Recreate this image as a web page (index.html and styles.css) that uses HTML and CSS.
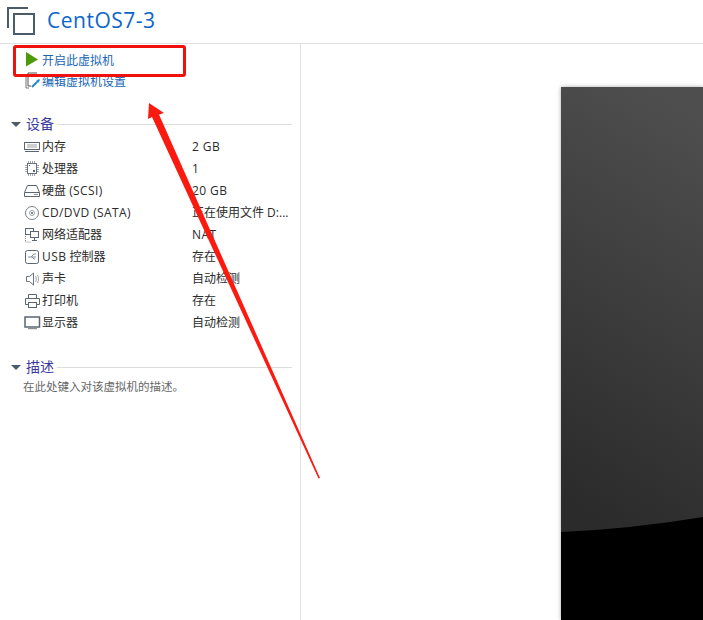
FILE: index.html
```html
<!doctype html>
<html>

<head>
    <title>CentOS7-3</title>
    <link rel="stylesheet" href="styles.css">
</head>

<body>
    <header class="vm-header">
        <svg class="vm-icon" width="36" height="36" viewBox="0 0 36 36">
            <path d="M28 8H8v20" fill="none" stroke="#4c5b68" stroke-width="2"/>
            <rect x="14" y="14" width="20" height="20" fill="none" stroke="#4c5b68" stroke-width="2"/>
        </svg>
        <h1 class="vm-title">CentOS7-3</h1>
    </header>

    <div class="content">
        <aside class="sidebar">
            <div class="actions">
                <a class="action">
                    <svg class="action-icon" width="17" height="21" viewBox="0 0 17 21">
                        <path d="M1 3l12 7.500-12 7z" fill="#4d9a08"/>
                    </svg>
                    <span class="action-text">开启此虚拟机</span>
                </a>
                <a class="action">
                    <svg class="action-icon" width="17" height="21" viewBox="0 0 17 21">
                        <path d="M3 3h9M3 3v13h3" fill="none" stroke="#555" stroke-width="1"/>
                        <path d="M1 6v12h3" fill="none" stroke="#777" stroke-width="1"/>
                        <path d="M7 17l5-5" stroke="#1e88d0" stroke-width="2"/>
                        <path d="M11 11l3-2 1 1-2 3z" fill="#1e88d0"/>
                    </svg>
                    <span class="action-text">编辑虚拟机设置</span>
                </a>
            </div>

            <section class="panel panel-devices">
                <div class="panel-head">
                    <span class="caret"></span>
                    <span class="panel-title">设备</span>
                    <span class="panel-line"></span>
                </div>
                <div class="device">
                    <svg class="device-icon" width="17" height="14" viewBox="0 0 17 14">
                        <rect x="0.500" y="2.500" width="15" height="7" fill="none" stroke="#5a6670"/>
                        <path d="M3 5h10M3 7h10" stroke="#9aa0a5"/>
                        <path d="M1 11.500h14" stroke="#5a6670"/>
                    </svg>
                    <span class="device-name">内存</span>
                    <span class="device-value latin">2 GB</span>
                </div>
                <div class="device">
                    <svg class="device-icon" width="17" height="16" viewBox="0 0 17 16">
                        <rect x="3.500" y="2.500" width="9" height="10" fill="#fff" stroke="#6a747c"/>
                        <path d="M4.500 0v2M6.500 0v2M8.500 0v2M10.500 0v2M4.500 13v2M6.500 13v2M8.500 13v2M10.500 13v2M1 4.500h2M1 6.500h2M1 8.500h2M1 10.500h2M13 4.500h2M13 6.500h2M13 8.500h2M13 10.500h2" stroke="#a0a5aa"/>
                        <rect x="9" y="9" width="2" height="2" fill="#5a6670"/>
                        <rect x="5" y="4" width="1" height="1" fill="#5a6670"/>
                    </svg>
                    <span class="device-name">处理器</span>
                    <span class="device-value">1</span>
                </div>
                <div class="device">
                    <svg class="device-icon" width="17" height="14" viewBox="0 0 17 14">
                        <path d="M0.500 8.500l3-7h9l3 7v4h-15zM0.500 8.500h15" fill="none" stroke="#5a6670"/>
                        <path d="M10 10.500h4" stroke="#8a9096"/>
                    </svg>
                    <span class="device-name">硬盘 <span class="latin">(SCSI)</span></span>
                    <span class="device-value latin">20 GB</span>
                </div>
                <div class="device">
                    <svg class="device-icon" width="17" height="16" viewBox="0 0 17 16">
                        <circle cx="8" cy="8" r="6.500" fill="none" stroke="#7a8288"/>
                        <circle cx="8" cy="8" r="2.500" fill="none" stroke="#9aa0a5"/>
                        <circle cx="8" cy="8" r="1" fill="#5a6670"/>
                    </svg>
                    <span class="device-name latin">CD/DVD (SATA)</span>
                    <span class="device-value">正在使用文件 D:...</span>
                </div>
                <div class="device">
                    <svg class="device-icon" width="17" height="16" viewBox="0 0 17 16">
                        <rect x="1.500" y="1.500" width="8" height="6" fill="#fff" stroke="#5a6670"/>
                        <rect x="6.500" y="4.500" width="8" height="6" fill="#fff" stroke="#5a6670"/>
                        <path d="M10.500 11v2M8 13.500h5" stroke="#5a6670"/>
                        <path d="M1.500 9v6h5" fill="none" stroke="#888" stroke-dasharray="1 1"/>
                    </svg>
                    <span class="device-name">网络适配器</span>
                    <span class="device-value latin">NAT</span>
                </div>
                <div class="device">
                    <svg class="device-icon" width="17" height="16" viewBox="0 0 17 16">
                        <rect x="1.500" y="1.500" width="13" height="13" rx="2" fill="none" stroke="#5a6670"/>
                        <path d="M4 8h8M7 8l3-3h2M8 8l2 2h1" fill="none" stroke="#8a9096"/>
                    </svg>
                    <span class="device-name"><span class="latin">USB</span> 控制器</span>
                    <span class="device-value">存在</span>
                </div>
                <div class="device">
                    <svg class="device-icon" width="17" height="16" viewBox="0 0 17 16">
                        <path d="M2.500 5.500h3l4-3.500v12l-4-3.500h-3z" fill="none" stroke="#6a747c"/>
                        <path d="M11.500 5c1 2 1 4 0 6M13.500 4c1.300 2.500 1.300 5.500 0 8" fill="none" stroke="#a0a5aa"/>
                    </svg>
                    <span class="device-name">声卡</span>
                    <span class="device-value">自动检测</span>
                </div>
                <div class="device">
                    <svg class="device-icon" width="17" height="16" viewBox="0 0 17 16">
                        <path d="M4.500 5.500v-4h8v4M4.500 11.500h-3v-6h14v6h-3" fill="none" stroke="#5a6670"/>
                        <rect x="4.500" y="9.500" width="8" height="5" fill="none" stroke="#5a6670"/>
                    </svg>
                    <span class="device-name">打印机</span>
                    <span class="device-value">存在</span>
                </div>
                <div class="device">
                    <svg class="device-icon" width="17" height="16" viewBox="0 0 17 16">
                        <rect x="1" y="2" width="14.500" height="10" fill="none" stroke="#5a6670" stroke-width="1.500"/>
                        <path d="M4 13.500h9" stroke="#8a9096" stroke-width="1.500"/>
                    </svg>
                    <span class="device-name">显示器</span>
                    <span class="device-value">自动检测</span>
                </div>
            </section>

            <section class="panel panel-desc">
                <div class="panel-head">
                    <span class="caret"></span>
                    <span class="panel-title">描述</span>
                    <span class="panel-line"></span>
                </div>
                <p class="desc-text">在此处键入对该虚拟机的描述。</p>
            </section>
        </aside>

        <main class="preview">
            <svg class="thumb" width="142" height="533" viewBox="0 0 142 533">
                <defs>
                    <linearGradient id="glass" x1="0.600" y1="0" x2="0.400" y2="1">
                        <stop offset="0" stop-color="#4e4e4e"/>
                        <stop offset="1" stop-color="#2b2b2b"/>
                    </linearGradient>
                </defs>
                <rect width="142" height="533" fill="#000"/>
                <path d="M0 0H142V430Q70 442 0 445Z" fill="url(#glass)"/>
            </svg>
        </main>
    </div>

    <!-- red annotation drawn on top of the screenshot -->
    <div class="mark-box"></div>
    <svg class="mark-arrow" width="703" height="620" viewBox="0 0 703 620">
        <path d="M149 103L164 113 159 114.500 320 478 318.500 478.500 152 117 148 119Z" fill="#fb1a10"/>
    </svg>
</body>

</html>
```

FILE: styles.css
```css
html,
body {
    height: 100%;
    margin: 0;
    overflow: hidden;
    background: #fff;
}

* {
    font-family: "Open Sans", "Noto Sans CJK SC", sans-serif;
}

.vm-header {
    height: 43px;
    border-bottom: 1px solid #e0e0e0;
    display: flex;
    align-items: flex-start;
}

.vm-icon {
    flex: none;
}

.vm-title {
    margin: 5px 0 0 11px;
    font-size: 21px;
    line-height: 30px;
    font-weight: 400;
    letter-spacing: 0.5px;
    color: #0b66c8;
}

.content {
    display: flex;
    height: 576px;
}

.sidebar {
    width: 300px;
    flex: none;
    border-right: 1px solid #e0e0e0;
}

.actions {
    padding: 5px 0 0 25px;
}

.action {
    display: flex;
    align-items: center;
    height: 21px;
    font-size: 12px;
    color: #1766b8;
}

.panel-head {
    display: flex;
    align-items: center;
    height: 20px;
    padding-left: 11px;
    padding-right: 8px;
}

.caret {
    width: 0;
    height: 0;
    border-left: 5px solid transparent;
    border-right: 5px solid transparent;
    border-top: 5px solid #4c5b68;
    margin-right: 5px;
}

.panel-title {
    font-size: 14px;
    padding-bottom: 2px;
    color: #3a3a9c;
}

.panel-line {
    flex: 1;
    height: 1px;
    margin-left: 3px;
    background: #ddd;
}

.panel-devices {
    margin-top: 23px;
}

.panel-desc {
    margin-top: 23px;
}

.panel-devices .panel-head {
    margin-bottom: 2px;
}

.device {
    display: flex;
    align-items: center;
    height: 22px;
    padding-left: 24px;
    font-size: 12px;
    color: #2b2b2b;
}

.device-icon {
    flex: none;
    margin-right: 1px;
}

.device-name {
    width: 150px;
    flex: none;
    white-space: nowrap;
    padding-bottom: 2px;
}

.device-value {
    white-space: nowrap;
    padding-bottom: 2px;
}

.latin {
    letter-spacing: 0.4px;
}

.desc-text {
    margin: 0;
    padding-left: 23px;
    font-size: 11.500px;
    line-height: 20px;
    color: #666;
}

.preview {
    flex: 1;
    padding: 43px 0 0 260px;
}

.thumb {
    display: block;
    box-shadow: 0 0 4px rgba(0, 0, 0, 0.35);
}

.mark-box {
    position: absolute;
    left: 13px;
    top: 45px;
    width: 167px;
    height: 26px;
    border: 3px solid #f0100c;
    border-radius: 3px;
}

.mark-arrow {
    position: absolute;
    left: 0;
    top: 0;
    pointer-events: none;
}
```
